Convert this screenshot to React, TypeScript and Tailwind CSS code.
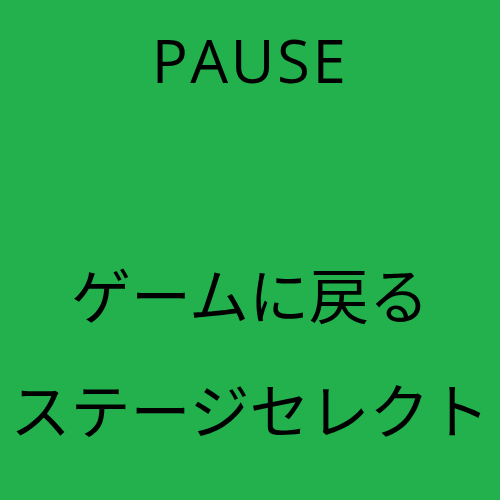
export default function App() {
  return (
    <div
      className="w-[500px] h-[500px] bg-[#22b14c] text-black flex flex-col items-center text-[60px] leading-none"
      style={{ fontFamily: '"Noto Sans CJK JP", "Noto Sans", sans-serif' }}
    >
      <div className="mt-[30px] font-['Open_Sans',sans-serif] tracking-[2.5px]">PAUSE</div>
      <div className="mt-[173px]">ゲームに戻る</div>
      <div className="mt-[55px]">ステージセレクト</div>
    </div>
  );
}
